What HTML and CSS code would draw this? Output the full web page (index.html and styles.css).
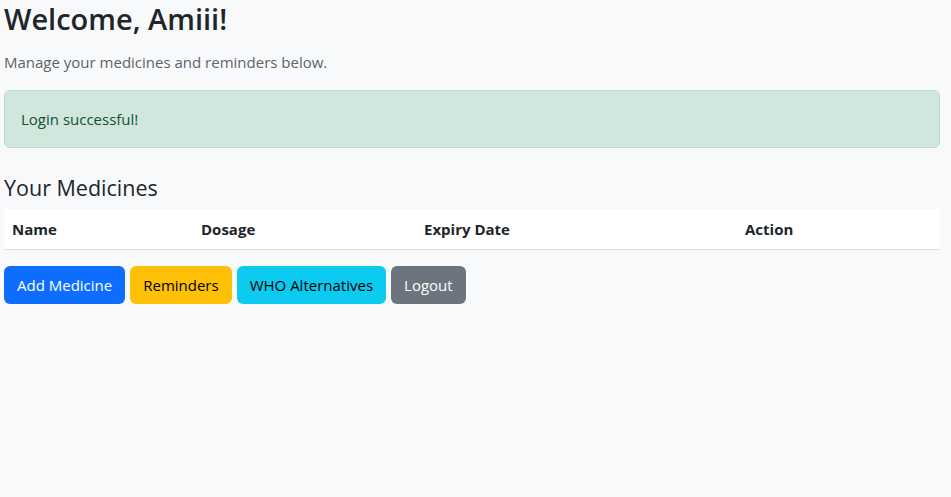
FILE: index.html
```html
<!DOCTYPE html>
<html lang="en">
<head>
<meta charset="utf-8">
<title>Dashboard</title>
<link rel="stylesheet" href="styles.css">
</head>
<body>
<div class="container">
  <h2 class="title">Welcome, Amiii!</h2>
  <p class="lead-text">Manage your medicines and reminders below.</p>
  <div class="alert">Login successful!</div>
  <h4 class="section-title">Your Medicines</h4>
  <table class="table">
    <thead>
      <tr>
        <th class="col-name">Name</th>
        <th class="col-dosage">Dosage</th>
        <th class="col-expiry">Expiry Date</th>
        <th class="col-action">Action</th>
      </tr>
    </thead>
    <tbody></tbody>
  </table>
  <div class="actions">
    <a class="btn btn-primary" href="#">Add Medicine</a>
    <a class="btn btn-warning" href="#">Reminders</a>
    <a class="btn btn-info" href="#">WHO Alternatives</a>
    <a class="btn btn-secondary" href="#">Logout</a>
  </div>
</div>
</body>
</html>
```
FILE: styles.css
```css
* { box-sizing: border-box; }
html, body { margin: 0; padding: 0; }
body {
  background: #f8f9fa;
  color: #212529;
  font-family: "Open Sans", "Noto Sans", sans-serif;
  font-size: 15px;
  line-height: 24px;
}
.container {
  padding: 2px 11px 0 4px;
}
.title {
  margin: 0 0 14px;
  font-size: 29px;
  font-weight: 600;
  line-height: 34px;
}
.lead-text {
  margin: 0 0 16px;
  color: #5c636a;
}
.alert {
  background: #d1e7dd;
  border: 1px solid #badbcc;
  border-radius: 6px;
  color: #0f5132;
  padding: 16px;
  margin-bottom: 16px;
}
.section-title {
  margin: 28px 0 9px;
  font-size: 21.5px;
  font-weight: 500;
  line-height: 24px;
}
.table {
  width: 100%;
  border-collapse: collapse;
  background: #fff;
  margin-bottom: 16px;
  table-layout: fixed;
}
.table th {
  text-align: left;
  padding: 8px;
  font-weight: 700;
  line-height: 24px;
  border-bottom: 1px solid #dee2e6;
}
.col-name { width: 189px; }
.col-dosage { width: 223px; }
.col-expiry { width: 321px; }
.col-action { width: auto; }
.actions {
  display: flex;
  gap: 5px;
}
.btn {
  display: inline-block;
  padding: 6px 12px;
  border: 1px solid transparent;
  border-radius: 6px;
  text-decoration: none;
  line-height: 24px;
  font-size: 15px;
}
.btn-primary { background: #0d6efd; color: #fff; }
.btn-warning { background: #ffc107; color: #000; }
.btn-info { background: #0dcaf0; color: #000; }
.btn-secondary { background: #6c757d; color: #fff; }
```
